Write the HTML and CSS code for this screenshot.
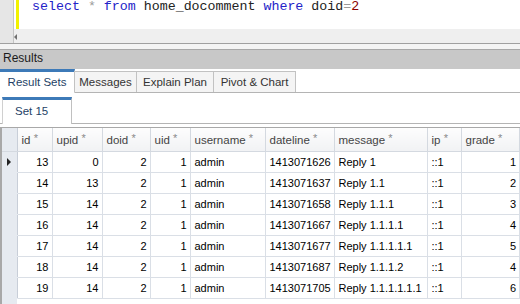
FILE: index.html
```html
<!DOCTYPE html>
<html lang="en">
<head>
  <meta charset="UTF-8" />
  <title>Query Results</title>
  <link rel="stylesheet" href="styles.css">
</head>
<body>
  <div class="editor">
    <div class="gutter"></div>
    <div class="editor-main">
      <div class="code-area">
        <div class="change-bar"></div>
        <pre class="code"><span class="kw">select</span> <span class="op">*</span> <span class="kw">from</span> home_docomment <span class="kw">where</span> doid<span class="op">=</span><span class="num">2</span></pre>
      </div>
      <div class="hscroll"><span class="arrow"></span></div>
    </div>
  </div>
  <div class="splitter"></div>

  <div class="results-title">Results</div>

  <!-- Result tabs -->
  <div class="tabs">
    <div class="tab active">Result Sets</div>
    <div class="tab tab-messages">Messages</div>
    <div class="tab tab-plan">Explain Plan</div>
    <div class="tab tab-chart">Pivot &amp; Chart</div>
  </div>

  <div class="subtabs">
    <div class="subtab active">Set 15</div>
  </div>

  <!-- Data grid -->
  <div class="grid-wrap">
    <table class="grid">
      <colgroup>
        <col style="width:15px"><col style="width:35px"><col style="width:50px"><col style="width:48px">
        <col style="width:40px"><col style="width:75px"><col style="width:69px"><col style="width:93px">
        <col style="width:34px"><col>
      </colgroup>
      <thead>
        <tr>
          <th class="rh"></th>
          <th>id <sup>*</sup></th>
          <th>upid <sup>*</sup></th>
          <th>doid <sup>*</sup></th>
          <th>uid <sup>*</sup></th>
          <th>username <sup>*</sup></th>
          <th>dateline <sup>*</sup></th>
          <th>message <sup>*</sup></th>
          <th>ip <sup>*</sup></th>
          <th>grade <sup>*</sup></th>
        </tr>
      </thead>
      <tbody>
        <tr>
          <td class="rh"><span class="current"></span></td>
          <td class="n">13</td><td class="n">0</td><td class="n">2</td><td class="n">1</td>
          <td>admin</td><td>1413071626</td><td>Reply 1</td><td>::1</td><td class="n">1</td>
        </tr>
        <tr>
          <td class="rh"></td>
          <td class="n">14</td><td class="n">13</td><td class="n">2</td><td class="n">1</td>
          <td>admin</td><td>1413071637</td><td>Reply 1.1</td><td>::1</td><td class="n">2</td>
        </tr>
        <tr>
          <td class="rh"></td>
          <td class="n">15</td><td class="n">14</td><td class="n">2</td><td class="n">1</td>
          <td>admin</td><td>1413071658</td><td>Reply 1.1.1</td><td>::1</td><td class="n">3</td>
        </tr>
        <tr>
          <td class="rh"></td>
          <td class="n">16</td><td class="n">14</td><td class="n">2</td><td class="n">1</td>
          <td>admin</td><td>1413071667</td><td>Reply 1.1.1.1</td><td>::1</td><td class="n">4</td>
        </tr>
        <tr>
          <td class="rh"></td>
          <td class="n">17</td><td class="n">14</td><td class="n">2</td><td class="n">1</td>
          <td>admin</td><td>1413071677</td><td>Reply 1.1.1.1.1</td><td>::1</td><td class="n">5</td>
        </tr>
        <tr>
          <td class="rh"></td>
          <td class="n">18</td><td class="n">14</td><td class="n">2</td><td class="n">1</td>
          <td>admin</td><td>1413071687</td><td>Reply 1.1.1.2</td><td>::1</td><td class="n">4</td>
        </tr>
        <tr>
          <td class="rh"></td>
          <td class="n">19</td><td class="n">14</td><td class="n">2</td><td class="n">1</td>
          <td>admin</td><td>1413071705</td><td>Reply 1.1.1.1.1.1</td><td>::1</td><td class="n">6</td>
        </tr>
      </tbody>
    </table>
  </div>
</body>
</html>
```

FILE: styles.css
```css
/* Base */
* {
  box-sizing: border-box;
  margin: 0;
  padding: 0;
}

html, body {
  width: 520px;
  height: 304px;
  overflow: hidden;
  background: #fff;
  font-family: 'Liberation Sans', Arial, sans-serif;
}

/* SQL editor */
.editor {
  display: flex;
  height: 44px;
  border-bottom: 1px solid #a0a0a0;
}

.gutter {
  width: 14px;
  background: #e6e6e6;
  border-right: 1px solid #c4c4c4;
}

.editor-main {
  flex: 1;
  display: flex;
  flex-direction: column;
}

.code-area {
  height: 29px;
  display: flex;
  padding-left: 2px;
}

.change-bar {
  width: 3px;
  background: #f2f200;
}

.code {
  font-family: 'Liberation Mono', 'Courier New', monospace;
  font-size: 13.3px;
  line-height: 13px;
  padding-left: 13px;
  color: #222;
}

.code .kw { color: #2323c8; }
.code .op { color: #9a9a9a; }
.code .num { color: #8b0000; }

.hscroll {
  flex: 1;
  background: #efefef;
  display: flex;
  align-items: center;
}

.hscroll .arrow {
  width: 0;
  height: 0;
  border-top: 3px solid transparent;
  border-bottom: 3px solid transparent;
  border-right: 3px solid #707070;
  margin-top: 1px;
}

.splitter {
  height: 6px;
  background: #f4f4f4;
  border-bottom: 1px solid #a8a8a8;
}

/* Results panel */
.results-title {
  height: 19px;
  background: #c8c8c8;
  font-size: 12px;
  line-height: 17px;
  padding-left: 3px;
  color: #1a1a1a;
}

.tabs {
  display: flex;
  align-items: flex-end;
  height: 24px;
  border-bottom: 1px solid #b4b4b4;
}

.tab {
  height: 21px;
  font-size: 11.5px;
  line-height: 20px;
  text-align: center;
  color: #333;
  background: #f4f4f4;
  border: 1px solid #c2c2c2;
  border-bottom: none;
  margin-left: -1px;
}

.tab-messages { width: 63px; }
.tab-plan { width: 78px; }
.tab-chart { width: 83px; }

.tab.active {
  height: 24px;
  width: 75px;
  margin-left: 0;
  background: #fff;
  color: #1e3f66;
  border: none;
  border-top: 3px solid #3d7ab8;
  border-right: 1px solid #d0d0d0;
  line-height: 20px;
  margin-bottom: -1px;
}

.subtabs {
  display: flex;
  align-items: flex-end;
  height: 31px;
  border-bottom: 1px solid #b4b4b4;
  padding-left: 2px;
}

.subtab {
  width: 70px;
  height: 27px;
  padding-left: 12px;
  font-size: 11.5px;
  line-height: 22px;
  color: #1e3f66;
  background: #fff;
  border-top: 3px solid #3d7ab8;
  border-left: 1px solid #d0d0d0;
  border-right: 1px solid #c0c0c0;
  margin-bottom: -1px;
}

/* Data grid */
.grid-wrap {
  margin-top: 3px;
  height: 180px;
  border-left: 2px solid #a8a8a8;
  border-top: 1px solid #a8a8a8;
  background: linear-gradient(to right, #e6eaf0 15px, #fff 15px);
}

.grid {
  border-collapse: collapse;
  table-layout: fixed;
  width: 518px;
  font-size: 11px;
  color: #000;
}

.grid th {
  height: 23px;
  text-align: left;
  font-weight: normal;
  padding-left: 4px;
  color: #444;
  font-size: 11.5px;
  background: linear-gradient(#fdfdfd, #f1f2f4);
  border-right: 1px solid #d4d9e0;
  border-bottom: 1px solid #d4d9e0;
  white-space: nowrap;
  overflow: hidden;
}

.grid th sup {
  color: #8a8a8a;
  font-size: 11px;
  vertical-align: 2px;
}

.grid td {
  height: 21px;
  padding: 0 4px;
  border-right: 1px solid #dadfe6;
  border-bottom: 1px solid #dadfe6;
  white-space: nowrap;
  overflow: hidden;
}

.grid td.n {
  text-align: right;
  padding-right: 3px;
}

.grid .rh {
  background: #e6eaf0;
  padding: 0;
  border-right: 1px solid #c8ced8;
}

.grid td.rh {
  border-bottom: 1px solid #e6eaf0;
}

.grid .current {
  display: block;
  width: 0;
  height: 0;
  margin-left: 5px;
  border-top: 4px solid transparent;
  border-bottom: 4px solid transparent;
  border-left: 4px solid #222;
}
```
